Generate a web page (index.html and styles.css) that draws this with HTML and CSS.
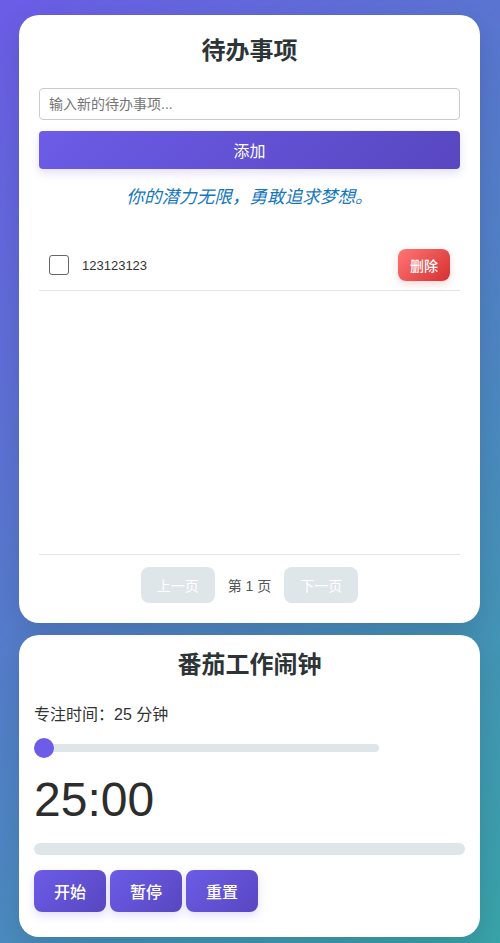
FILE: index.html
```html
<!DOCTYPE html>
<html lang="zh">
<head>
<meta charset="utf-8">
<title>待办事项</title>
<link rel="stylesheet" href="styles.css">
</head>
<body>
<div class="app">
  <section class="card todo-card">
    <h2 class="card-title">待办事项</h2>
    <input class="todo-input" type="text" placeholder="输入新的待办事项...">
    <button class="btn-primary add-btn">添加</button>
    <p class="quote">你的潜力无限，勇敢追求梦想。</p>
    <ul class="todo-list">
      <li class="todo-item">
        <input class="todo-check" type="checkbox">
        <span class="todo-text">123123123</span>
        <button class="btn-delete">删除</button>
      </li>
    </ul>
    <div class="pagination">
      <button class="page-btn" disabled>上一页</button>
      <span class="page-info">第 1 页</span>
      <button class="page-btn" disabled>下一页</button>
    </div>
  </section>

  <section class="card pomodoro-card">
    <h2 class="card-title pomo-title">番茄工作闹钟</h2>
    <div class="focus-label">专注时间：25 分钟</div>
    <div class="slider-row">
      <input class="slider" type="range" min="25" max="60" value="25">
    </div>
    <div class="timer">25:00</div>
    <div class="progress"><div class="progress-fill"></div></div>
    <div class="controls">
      <button class="btn-primary ctrl-btn">开始</button>
      <button class="btn-primary ctrl-btn">暂停</button>
      <button class="btn-primary ctrl-btn">重置</button>
    </div>
  </section>
</div>
</body>
</html>
```

FILE: styles.css
```css
* { box-sizing: border-box; }
html, body { margin: 0; }
body {
  min-height: 943px;
  padding: 15px 20px 15px 19px;
  background: linear-gradient(135deg, #6c5ce7 0%, #38a4a8 100%);
  font-family: "Liberation Sans", "Noto Sans CJK SC", sans-serif;
  color: #333;
}
.app { width: 461px; }
.card {
  background: #fff;
  border-radius: 20px;
  box-shadow: 0 10px 30px rgba(0, 0, 0, 0.12);
}
.todo-card { padding: 20px 20px 20px 20px; }
.pomodoro-card { margin-top: 12px; padding: 15px 15px 25px 15px; }
.card-title {
  margin: 0 0 21px;
  font-size: 24px;
  line-height: 32px;
  font-weight: 700;
  text-align: center;
  color: #2d3436;
}
.todo-input {
  display: block;
  width: 100%;
  height: 32px;
  padding: 0 9px;
  border: 1px solid #ccc;
  border-radius: 4px;
  font-family: inherit;
  font-size: 14px;
  color: #333;
  outline: none;
}
.todo-input::placeholder { color: #757575; }
.btn-primary {
  border: none;
  color: #fff;
  font-family: inherit;
  background: linear-gradient(135deg, #6c5ce7 0%, #5847c0 100%);
  box-shadow: 0 4px 10px rgba(108, 92, 231, 0.2);
  cursor: pointer;
}
.add-btn {
  display: block;
  width: 100%;
  height: 38px;
  margin-top: 11px;
  border-radius: 4px;
  font-size: 16px;
}
.quote {
  margin: 16px 0 32px;
  font-size: 17.6px;
  line-height: 24px;
  font-style: italic;
  text-align: center;
  color: #1477bd;
}
.todo-list {
  list-style: none;
  margin: 0;
  padding: 0;
  height: 313px;
}
.todo-item {
  display: flex;
  align-items: center;
  padding: 8px 10px 9px 10px;
  border-bottom: 1px solid #dfe6e9;
}
.todo-check {
  appearance: none;
  -webkit-appearance: none;
  width: 20px;
  height: 20px;
  margin: 0 13px 0 0;
  border: 1px solid #666;
  border-radius: 3px;
  background: #fff;
}
.todo-text { flex: 1; font-size: 13px; color: #333; }
.btn-delete {
  width: 52px;
  height: 32px;
  border: none;
  border-radius: 8px;
  font-family: inherit;
  font-size: 14px;
  font-weight: 500;
  color: #fff;
  background: linear-gradient(135deg, #ff7675 0%, #d63031 100%);
  box-shadow: 0 3px 8px rgba(214, 48, 49, 0.2);
}
.pagination {
  display: flex;
  justify-content: center;
  align-items: center;
  gap: 13px;
  padding-top: 12px;
  border-top: 1px solid #dfe6e9;
}
.page-btn {
  width: 74px;
  height: 36px;
  border: none;
  border-radius: 8px;
  background: #dfe6e9;
  color: #fff;
  font-family: inherit;
  font-size: 14px;
}
.page-info { font-size: 14px; color: #555; }
.pomo-title { margin-bottom: 24px; line-height: 30px; }
.focus-label { font-size: 16px; line-height: 22px; color: #333; }
.slider-row { margin-top: 12px; height: 20px; }
.slider {
  -webkit-appearance: none;
  appearance: none;
  display: block;
  width: 80%;
  height: 20px;
  margin: 0;
  background: transparent;
}
.slider::-webkit-slider-runnable-track {
  height: 8px;
  border-radius: 4px;
  background: #dfe6e9;
}
.slider::-webkit-slider-thumb {
  -webkit-appearance: none;
  width: 20px;
  height: 20px;
  margin-top: -6px;
  border-radius: 50%;
  background: #6c5ce7;
}
.timer {
  margin-top: 14px;
  font-size: 48px;
  line-height: 55px;
  color: #2d2d2d;
}
.progress {
  margin-top: 16px;
  height: 12px;
  border-radius: 6px;
  background: #dfe6e9;
  overflow: hidden;
}
.progress-fill { width: 0; height: 100%; background: #6c5ce7; }
.controls { display: flex; gap: 4px; margin-top: 15px; }
.ctrl-btn {
  width: 72px;
  height: 42px;
  border-radius: 8px;
  font-size: 16px;
  font-weight: 500;
}
```
